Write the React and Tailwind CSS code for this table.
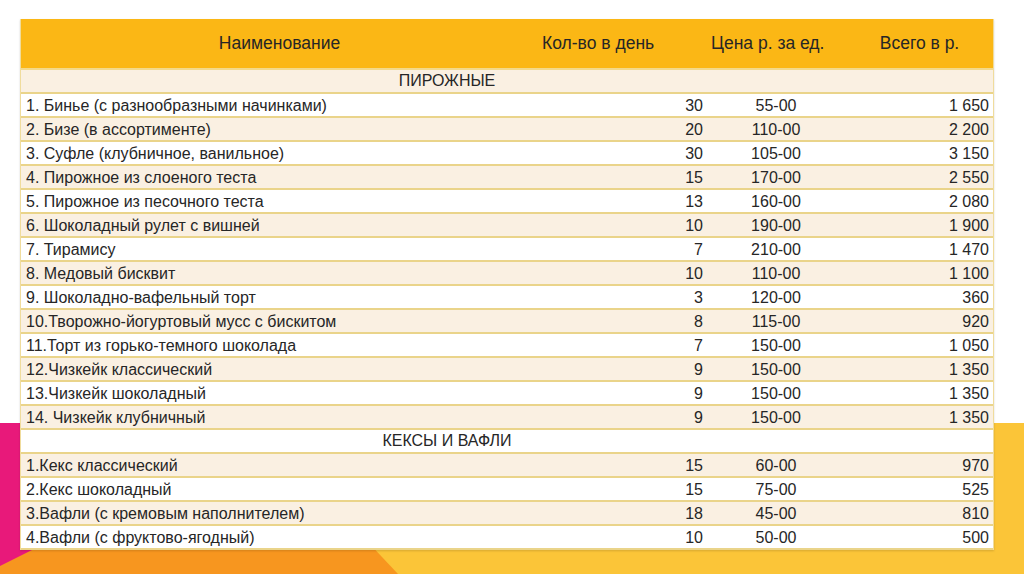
const cakes = [
  ["1. Бинье (с разнообразными начинками)", "30", "55-00", "1 650"],
  ["2. Бизе (в ассортименте)", "20", "110-00", "2 200"],
  ["3. Суфле (клубничное, ванильное)", "30", "105-00", "3 150"],
  ["4. Пирожное из слоеного теста", "15", "170-00", "2 550"],
  ["5. Пирожное из песочного теста", "13", "160-00", "2 080"],
  ["6. Шоколадный рулет с вишней", "10", "190-00", "1 900"],
  ["7. Тирамису", "7", "210-00", "1 470"],
  ["8. Медовый бисквит", "10", "110-00", "1 100"],
  ["9. Шоколадно-вафельный торт", "3", "120-00", "360"],
  ["10.Творожно-йогуртовый мусс с бискитом", "8", "115-00", "920"],
  ["11.Торт из горько-темного шоколада", "7", "150-00", "1 050"],
  ["12.Чизкейк классический", "9", "150-00", "1 350"],
  ["13.Чизкейк шоколадный", "9", "150-00", "1 350"],
  ["14. Чизкейк клубничный", "9", "150-00", "1 350"],
];

const muffins = [
  ["1.Кекс классический", "15", "60-00", "970"],
  ["2.Кекс шоколадный", "15", "75-00", "525"],
  ["3.Вафли (с кремовым наполнителем)", "18", "45-00", "810"],
  ["4.Вафли (с фруктово-ягодный)", "10", "50-00", "500"],
];

const rows = [
  { section: "ПИРОЖНЫЕ" },
  ...cakes.map((r) => ({ cells: r })),
  { section: "КЕКСЫ И ВАФЛИ" },
  ...muffins.map((r) => ({ cells: r })),
];

const grid = "grid grid-cols-[517px_170px_136px_151px]";

const Row = ({ row, i }) => {
  const bg = i % 2 === 0 ? "bg-[#faf0e2]" : "bg-white";
  if (row.section) {
    return (
      <div
        className={`${bg} h-[24px] border-b-2 border-[#ead48a] flex items-center justify-center pr-[120px]`}
      >
        {row.section}
      </div>
    );
  }
  const [name, qty, price, total] = row.cells;
  return (
    <div className={`${grid} ${bg} h-[24px] border-b-2 border-[#ead48a] items-center`}>
      <span className="pl-[5px] whitespace-nowrap">{name}</span>
      <span className="text-right pr-[5px]">{qty}</span>
      <span className="text-center">{price}</span>
      <span className="text-right pr-[6px]">{total}</span>
    </div>
  );
};

const App = () => {
  return (
    <div className="relative w-[1024px] h-[574px] overflow-hidden bg-white font-['Liberation_Sans',Arial,sans-serif] text-[16px] text-[#262626]">
      <svg className="absolute inset-0" width="1024" height="574" viewBox="0 0 1024 574">
        <rect x="0" y="423" width="1024" height="151" fill="#fbc538" />
        <polygon points="0,540 366,540 398,574 0,574" fill="#f7961f" />
        <polygon points="0,423 40,423 40,546 0,566" fill="#e8197a" />
      </svg>
      <div className="relative pt-[19px] pl-[20px]">
        <div className="w-[974px] border-l border-r border-[#f0dc9c] shadow-[0_1px_2px_rgba(0,0,0,0.15)]">
          <div className={`${grid} h-[51px] bg-[#fbb715] items-center text-[17.5px] border-b-2 border-[#f3d98a]`}>
            <span className="text-center">Наименование</span>
            <span className="pl-[4px] whitespace-nowrap">Кол-во в день</span>
            <span className="pl-[3px] whitespace-nowrap">Цена р. за ед.</span>
            <span className="text-center">Всего в р.</span>
          </div>
          {rows.map((row, i) => (
            <Row key={i} row={row} i={i} />
          ))}
        </div>
      </div>
    </div>
  );
};

export default App;
